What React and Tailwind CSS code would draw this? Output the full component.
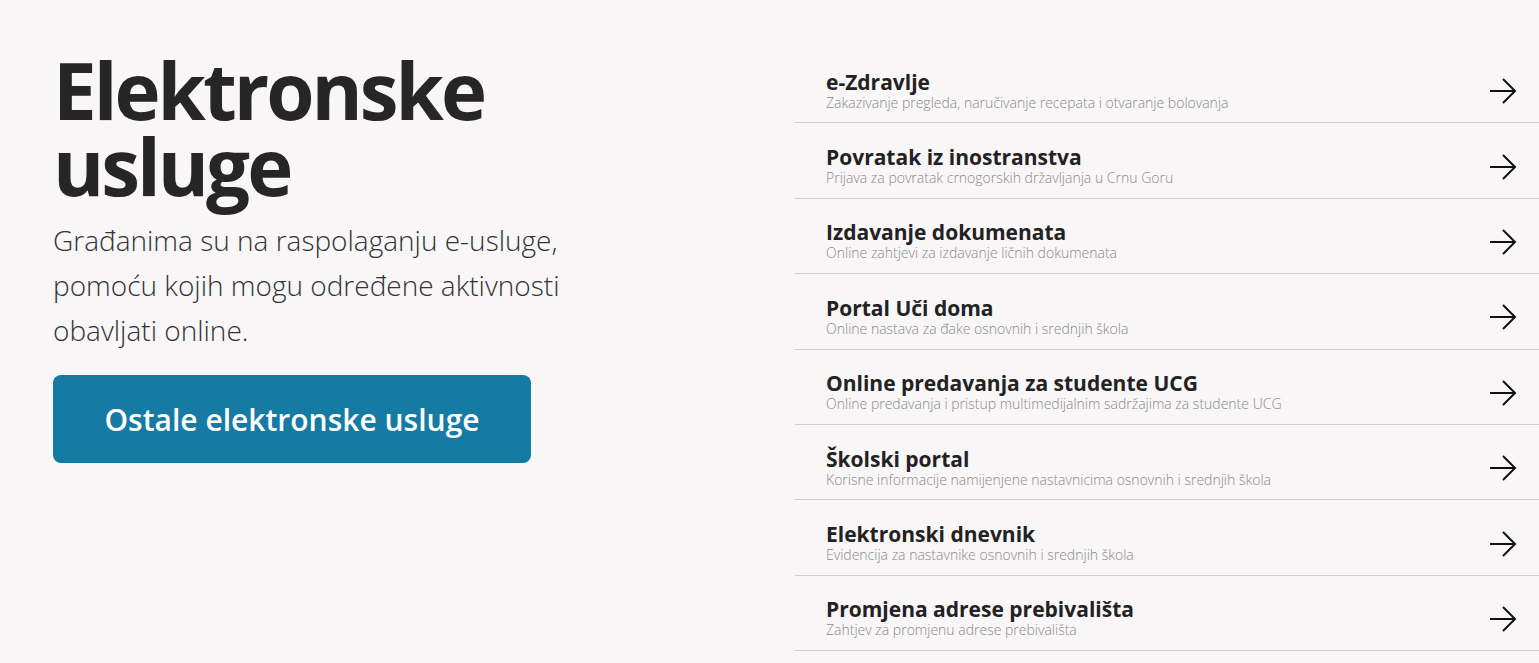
const services = [
  { title: 'e-Zdravlje', desc: 'Zakazivanje pregleda, naručivanje recepata i otvaranje bolovanja' },
  { title: 'Povratak iz inostranstva', desc: 'Prijava za povratak crnogorskih državljanja u Crnu Goru' },
  { title: 'Izdavanje dokumenata', desc: 'Online zahtjevi za izdavanje ličnih dokumenata' },
  { title: 'Portal Uči doma', desc: 'Online nastava za đake osnovnih i srednjih škola' },
  { title: 'Online predavanja za studente UCG', desc: 'Online predavanja i pristup multimedijalnim sadržajima za studente UCG' },
  { title: 'Školski portal', desc: 'Korisne informacije namijenjene nastavnicima osnovnih i srednjih škola' },
  { title: 'Elektronski dnevnik', desc: 'Evidencija za nastavnike osnovnih i srednjih škola' },
  { title: 'Promjena adrese prebivališta', desc: 'Zahtjev za promjenu adrese prebivališta' },
]

function Arrow() {
  return (
    <svg width="28" height="26" viewBox="0 0 28 26" fill="none" stroke="#111" strokeWidth="2" className="mt-[12px]">
      <path d="M1 13h25" />
      <path d="M14 1l12 12-12 12" />
    </svg>
  )
}

export default function App() {
  return (
    <div className="min-h-[663px] bg-[#f8f6f7] text-[#262626] flex font-['Open_Sans',sans-serif]">
      {/* Left intro */}
      <div className="w-[795px] shrink-0 pl-[53px] pt-[52px]">
        <h1 className="text-[78px] font-bold leading-[76px] tracking-[-3px]">
          Elektronske
          <br />
          usluge
        </h1>
        <p className="mt-[14px] w-[540px] text-[28px] font-light leading-[45px] text-[#333]">
          Građanima su na raspolaganju e-usluge, pomoću kojih mogu određene aktivnosti obavljati online.
        </p>
        <button className="mt-[22px] w-[478px] h-[88px] rounded-[8px] bg-[#157ba5] text-white text-[30px] font-semibold">
          Ostale elektronske usluge
        </button>
      </div>

      {/* Service list */}
      <ul className="flex-1 pt-[48px]">
        {services.map((s) => (
          <li
            key={s.title}
            className="h-[75.4px] border-b border-[#cfcfcf] flex items-center pl-[31px] pr-[22px] gap-4"
          >
            <div className="flex-1 mt-[10px]">
              <div className="text-[21px] font-bold leading-[24px] text-[#222]">{s.title}</div>
              <div className="text-[14px] font-light leading-[17px] text-[#8a8a8a]">{s.desc}</div>
            </div>
            <Arrow />
          </li>
        ))}
      </ul>
    </div>
  )
}
